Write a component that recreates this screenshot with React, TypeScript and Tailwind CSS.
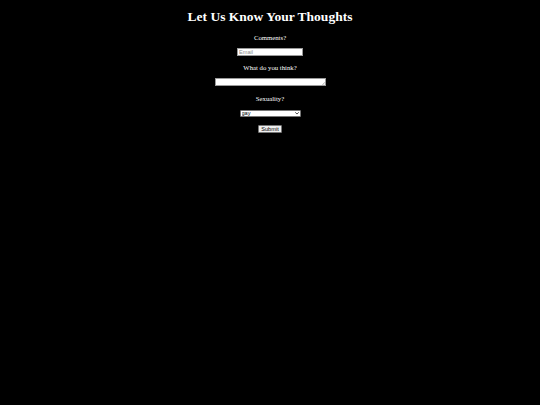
export default function App() {
  return (
    <div className="w-[540px] h-[405px] bg-black text-white overflow-hidden flex flex-col items-center [font-family:'Liberation_Serif','Times_New_Roman',serif]">
      <h1 className="mt-[9px] text-[13.5px] leading-[15.5px] font-bold">Let Us Know Your Thoughts</h1>
      <p className="mt-[9px] text-[6.75px] leading-[7.8px]">Comments?</p>
      <input
        type="text"
        placeholder="Email"
        className="mt-[7px] w-[66px] h-[8px] box-border bg-white border-[0.8px] border-[#9a9a9a] px-[1px] text-[5.6px] leading-[6px] text-black placeholder:text-[#8a8a8a] outline-none [font-family:'Liberation_Sans',Arial,sans-serif]"
      />
      <p className="mt-[7.3px] text-[6.75px] leading-[7.8px]">What do you think?</p>
      <div className="relative mt-[6.5px] w-[111px] h-[8px]">
        <textarea
          rows={1}
          className="block w-full h-full box-border bg-white border-[0.8px] border-[#9a9a9a] resize-none overflow-hidden text-[5.6px] leading-[6px] text-black outline-none [font-family:'Liberation_Mono',monospace]"
        />
        <svg className="absolute right-[1px] bottom-[1px] w-[3px] h-[3px]" viewBox="0 0 6 6">
          <path d="M5.5 0.5 L0.5 5.5 M5.5 3 L3 5.5" stroke="#8a8a8a" strokeWidth="1" fill="none" />
        </svg>
      </div>
      <p className="mt-[8.8px] text-[6.75px] leading-[7.8px]">Sexuality?</p>
      <div className="relative mt-[7.7px] w-[61px] h-[7.2px]">
        <select
          defaultValue="gay"
          className="block w-full h-full box-border bg-white border-[0.8px] border-[#767676] rounded-[1px] pl-[1px] py-0 text-[5.6px] leading-[5.6px] text-black appearance-none outline-none [font-family:'Liberation_Sans',Arial,sans-serif]"
        >
          <option value="gay">gay</option>
          <option value="straight">straight</option>
          <option value="other">other</option>
        </select>
        <svg className="absolute right-[2px] top-[2.3px] w-[4px] h-[2.6px] pointer-events-none" viewBox="0 0 8 5">
          <path d="M1 1 L4 4 L7 1" stroke="#222" strokeWidth="1.6" fill="none" strokeLinecap="round" strokeLinejoin="round" />
        </svg>
      </div>
      <button
        type="button"
        className="mt-[8px] w-[23.5px] h-[7.8px] box-border bg-[#efefef] border-[0.8px] border-[#767676] rounded-[1px] text-[5.6px] leading-[6px] text-black flex items-center justify-center [font-family:'Liberation_Sans',Arial,sans-serif]"
      >
        Submit
      </button>
    </div>
  );
}
